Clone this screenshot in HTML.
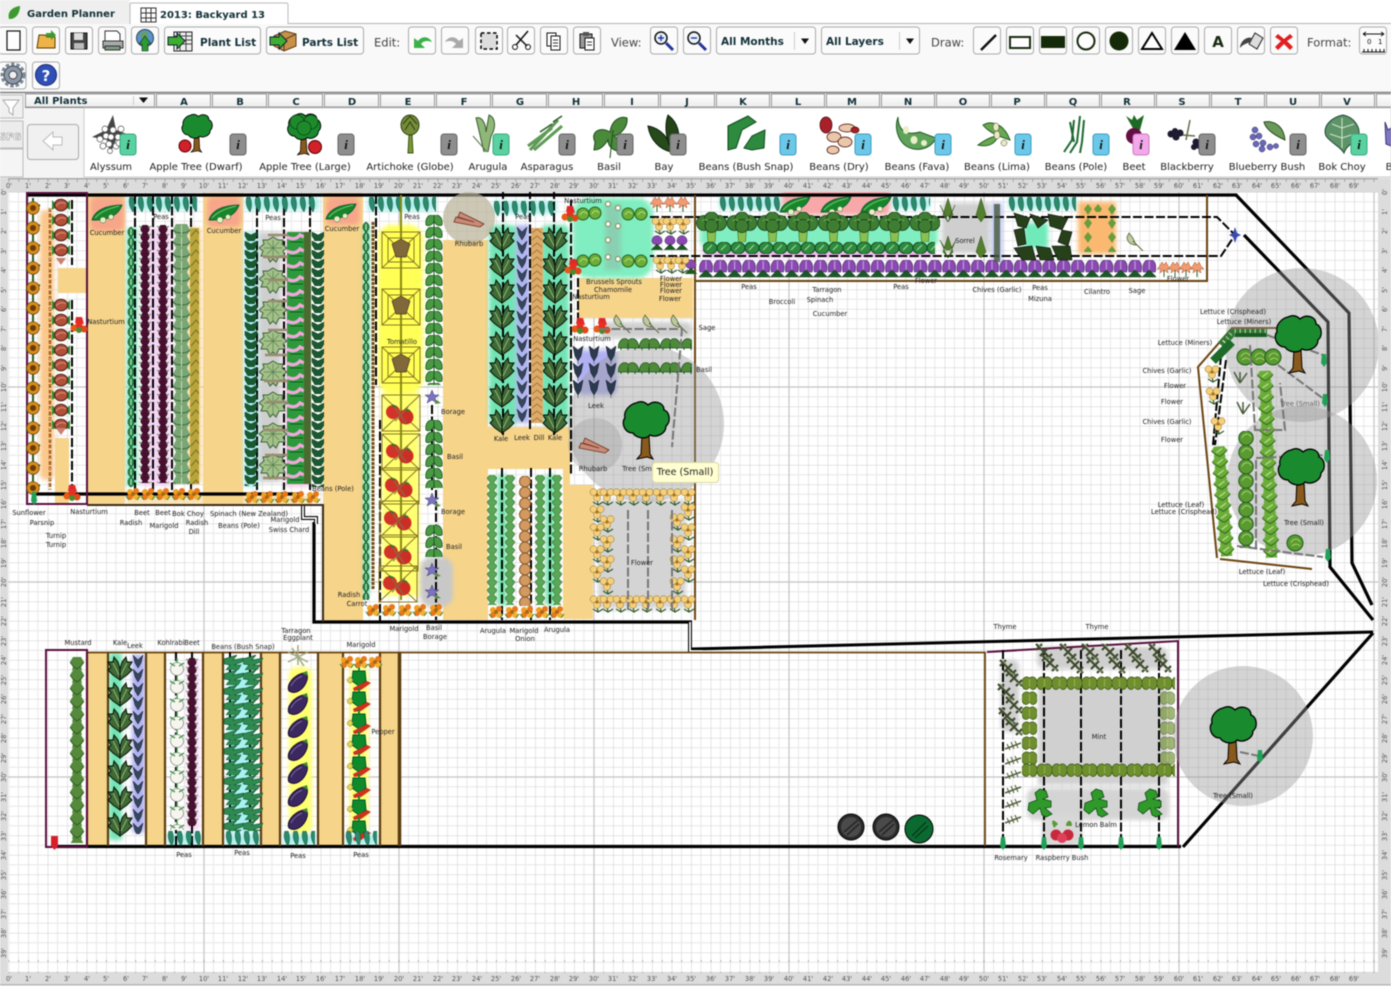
<!DOCTYPE html>
<html><head><meta charset="utf-8"><title>Garden Planner</title>
<style>
html,body{margin:0;padding:0;background:#fff;overflow:hidden}
svg{display:block;filter:blur(.45px)}
.t{font:6.7px "DejaVu Sans",sans-serif;text-anchor:middle;fill:#222}
.p{font:10px "DejaVu Sans",sans-serif;text-anchor:middle;fill:#222}
.r{font:6.6px "DejaVu Sans",sans-serif;text-anchor:middle;fill:#555}
.h{font:bold 10px "DejaVu Sans",sans-serif;fill:#123038}
.l{font:11.5px "DejaVu Sans",sans-serif;fill:#444}
.i{font:italic bold 13px "Liberation Serif",serif;text-anchor:middle;fill:#111}
.b{fill:#fbfbfb;stroke:#aaa;stroke-width:1}
.s{fill:none;stroke:#000;stroke-width:3.2}
.d{fill:none;stroke:#000;stroke-width:2;stroke-dasharray:9 2.5}
.g{fill:none;stroke:#777;stroke-width:2;stroke-dasharray:9 2.5}
.c{fill:#999;opacity:.42}
.w{filter:url(#sf)}
</style></head><body>
<svg width="1391" height="989" viewBox="0 0 1391 989" xmlns="http://www.w3.org/2000/svg">
<defs>
<filter id="sf" x="-20%" y="-20%" width="140%" height="140%"><feGaussianBlur stdDeviation="2"/></filter>
<linearGradient id="bt" x1="0" y1="0" x2="0" y2="1"><stop offset="0" stop-color="#fff"/><stop offset="1" stop-color="#ececec"/></linearGradient>
<pattern id="grid" width="19.5" height="19.5" patternUnits="userSpaceOnUse" patternTransform="translate(8.7,192)"><path d="M9.75 0V19.5M0 9.75H19.5" stroke="#e8e8e8" stroke-width="1"/><path d="M0 0V19.5M0 0H19.5" stroke="#cfcfcf" stroke-width="1.1"/></pattern>
<pattern id="tick" width="9.75" height="13" patternUnits="userSpaceOnUse" patternTransform="translate(8.7,0)"><path d="M0 10V13" stroke="#777"/></pattern>

<g id="tree"><path d="M-4 3L-5 24L-9 29L1 27L7 29L4 24L3 5Z" fill="#8a5a1c" stroke="#000"/><path d="M-10-27C-4-30 0-27 2-25C8-30 18-28 18-20C24-18 25-8 20-4C20 4 10 8 4 5C0 10-10 8-13 3C-22 3-25-8-21-12C-23-20-15-26-10-27Z" fill="#1a8a2e" stroke="#000" stroke-width="1.3"/></g>
<g id="cuc"><path d="M-15 7C-12-3 0-8 15-8C12 2 0 8-15 7Z" fill="#17862a" stroke="#053" stroke-width=".8"/><path d="M-12 5C-6-2 4-5 12-7" stroke="#8fd080" fill="none" stroke-width=".8"/><circle cx="-4" cy="7" r="3" fill="#e8f0c0" stroke="#264" stroke-width=".5"/><circle cx="4" cy="4" r="2.6" fill="#e8f0c0" stroke="#264" stroke-width=".5"/></g>
<g id="mg"><circle cx="-3" cy="-2" r="3" fill="#f0a020"/><circle cx="3" cy="-3" r="3" fill="#e87818"/><circle cx="-3" cy="3" r="3" fill="#e87818"/><circle cx="3" cy="3" r="3" fill="#f2b030"/><circle r="2" fill="#a86810"/><path d="M-7 2L-4 6M7 2L4 6" stroke="#3a8030"/></g>
<g id="na"><path d="M-4-3L-3-9L3-9L5-2Z" fill="#e02a2a"/><circle cx="-5" cy="2" r="3.5" fill="#e85a18"/><circle cx="5" cy="3" r="3.5" fill="#e04818"/><circle cy="-1" r="3.5" fill="#e83020"/><circle cx="0" cy="4" r="3" fill="#4c8a30"/></g>
<g id="yf"><path d="M0 4L1 10M-4 7L1 10L6 7" stroke="#2e5a2a" stroke-width="1.2" fill="none"/><circle cx="-3.400" cy="-2.800" r="3.500" fill="#f6cf7a" stroke="#8a6a20" stroke-width=".5"/><circle cx="3.600" cy="-2.800" r="3.500" fill="#f6cf7a" stroke="#8a6a20" stroke-width=".5"/><circle cx="0" cy="3" r="3.500" fill="#f6cf7a" stroke="#8a6a20" stroke-width=".5"/><circle r="1.600" fill="#a8741c"/></g>
<g id="pf"><path d="M-5 0C-5-7 5-7 5 0C5 5-5 5-5 0Z" fill="#8a48b0" stroke="#3a1860" stroke-width=".5"/><path d="M-6 9L0 3L6 9" fill="#1c5a22" stroke="#0c2c10" stroke-width=".5"/></g>
<g id="sf2"><path d="M-2-6L-5-1L-7 1L-3 1L-4 5L0 2L4 5L3 1L7 1L4-2L2-6L0-3Z" fill="#f49a70" stroke="#a0502c" stroke-width=".5"/><path d="M0 2V9" stroke="#2e6a2a"/></g>
<g id="trel"><path d="M-19-18H19V18H-19ZM-13-12H13V12H-13ZM-19-18L19 18M19-18L-19 18" fill="none" stroke="#8a7a20" stroke-width="1"/><path d="M-9-6L0-11L9-6L5 7H-5Z" fill="#80683a" stroke="#4a3820" stroke-width=".7"/></g>
<g id="trt"><path d="M-19-18H19V18H-19ZM-19-18L19 18M19-18L-19 18" fill="none" stroke="#8a7a20" stroke-width="1"/><circle cx="-8" cy="-1" r="7" fill="#d23228"/><circle cx="5" cy="4" r="7.5" fill="#cc2e26"/><path d="M-9-8L-5-6M4-4L9-2" stroke="#2e7a2a" stroke-width="2"/><path d="M-6-5L5 10M7-6L-6 8" stroke="#8a6a40" stroke-width="2" opacity=".7"/></g>
<g id="bor"><path d="M0-7L2-2L7-2L3 1L5 6L0 3L-5 6L-3 1L-7-2L-2-2Z" fill="#7c74c0" stroke="#3a3570" stroke-width=".5"/><path d="M3 2L9 6L3 7" fill="#5a8a4a"/></g>
<g id="sage"><path d="M-2-7L2-2L5 5C0 5-4 2-4-3Z" fill="#c0c8a0" stroke="#445a30" stroke-width=".7"/><path d="M2 1L12 11" stroke="#5a6a3a"/></g>
<g id="leek"><path d="M-5-6L0-2L5-6L3 4L0 9L-3 4Z" fill="#2c3a4e" stroke="#0a1420" stroke-width=".5"/><path d="M0 9V12" stroke="#777"/></g>
<g id="rhu"><path d="M-15 4L11 9L15 6L-9-6L-11-1L5 4L-13-1Z" fill="#c98a78" stroke="#6a3420" stroke-width=".8"/></g>
<g id="cab"><circle r="8" fill="#5a9a30" stroke="#1e5a1c"/><path d="M-4 0C-2-5 3-5 5-1M-3 3C0 0 3 1 5 3" stroke="#b8e080" fill="none" stroke-width=".8"/></g>
<g id="spr"><circle r="6" fill="#6cae38" stroke="#23601c"/><path d="M-3 1C-1-3 2-3 4 0" stroke="#c8e890" fill="none" stroke-width=".8"/></g>
<g id="egg"><path d="M-9 8C-12 2-5-7 5-10C9-11 10-7 9-3C6 7-3 12-9 8Z" fill="#3c2860" stroke="#160a30"/><path d="M4-10L9-12L10-7Z" fill="#3a8a2e"/><path d="M-7 3C-4-3 0-5 4-7" stroke="#8c7ab0" fill="none" stroke-width=".8"/></g>
<g id="pep"><path d="M-6-7L6-7L7 3L0 8L-7 3Z" fill="#0f8a2a" stroke="#053"/><path d="M-6 10L8 3L12 5L2 12L-5 13Z" fill="#d0301c"/><path d="M-8-1C-13 0-13 5-8 5L-6 2Z" fill="#e4d450" stroke="#806a18" stroke-width=".5"/><path d="M-1-7V-11H1V-7" fill="#0f8a2a"/></g>
<g id="thy"><path d="M-8-8L8 8M-4 4L4-4M-8-2L-2-8M2 8L8 2" stroke="#3e4a2c" stroke-width="2.2" fill="none"/><path d="M-6-8L-2-4M2 4L7 7" stroke="#9aa88a" fill="none"/></g>
<g id="ros"><path d="M-8 3L8-3" stroke="#50603a" stroke-width="1.5"/><path d="M-6-2L-3 4M-2-4L1 3M2-5L5 2" stroke="#50603a"/></g>
<g id="lem"><path d="M0-14L6-12L8-6L3-4L11-2L11 4L5 5L12 11L6 14L2 12L0 5L-7 11L-12 7L-11 0L-3-3L-5-10Z" fill="#2f9a2a" stroke="#0e4a10" stroke-width=".8"/></g>
<g id="bar"><circle r="13" fill="#2a2a2a" stroke="#000"/><circle r="10" fill="#4a4a4a"/><path d="M-7 5L7-7M-4 8L8-3" stroke="#222" stroke-width="1.4"/></g>
<g id="noz"><path d="M-2 -6H2L3 3L0 7L-3 3Z" fill="#22a058"/></g>

<pattern id="psun" width="16" height="20" patternUnits="userSpaceOnUse"><path d="M1 13L15 7M8 0V20" stroke="#2c5a22" stroke-width="2"/><circle cx="8" cy="10" r="6.300" fill="#d48c1c" stroke="#6a4008" stroke-width=".7"/><circle cx="8" cy="10" r="3" fill="#6a3c08"/></pattern>
<pattern id="prad" width="18" height="15" patternUnits="userSpaceOnUse"><path d="M0 3L6 9L0 13ZM18 3L12 9L18 13Z" fill="#2a8a2e"/><ellipse cx="9" cy="8" rx="6.5" ry="5.8" fill="#b2503c" stroke="#4a1a10"/><path d="M4 9C7 5 11 5 14 7" stroke="#d8957f" fill="none"/></pattern>
<pattern id="pbeet" width="12" height="8" patternUnits="userSpaceOnUse"><circle cx="6" cy="4" r="4.2" fill="#4a0f30" stroke="#26061a" stroke-width=".6"/><path d="M0 1L3 3M12 1L9 3" stroke="#5a8a4a"/></pattern>
<pattern id="pgv" width="8" height="10" patternUnits="userSpaceOnUse"><path d="M4 0C0 3 0 7 4 10C8 7 8 3 4 0Z" fill="#2c8a4a" stroke="#0e5028" stroke-width=".7"/><path d="M4 2V8" stroke="#c8f0c8"/></pattern>
<pattern id="pbok" width="17" height="12" patternUnits="userSpaceOnUse"><path d="M3 0H14L17 6L14 12H3L0 6Z" fill="#7aa574"/><path d="M0 6C3 10 14 10 17 6" stroke="#36643c" fill="none"/><path d="M8.500 1V11" stroke="#c0dcb0"/></pattern>
<pattern id="pyel" width="12" height="10" patternUnits="userSpaceOnUse"><rect width="12" height="10" fill="#b8a63c"/><path d="M1 8L6 2L11 8" stroke="#7a6e20" fill="none"/></pattern>
<pattern id="pdl" width="14" height="9" patternUnits="userSpaceOnUse"><path d="M1 0L7 3L13 0L13 4L10 9H4L1 4Z" fill="#1a5a30" stroke="#0a2c18" stroke-width=".5"/></pattern>
<pattern id="pspn" width="28" height="31" patternUnits="userSpaceOnUse"><path d="M14 1L19 4L24 4L23 8L28 12L24 15L26 20L20 20L17 26L14 23L11 26L8 20L2 20L4 15L0 12L5 8L4 4L9 4Z" fill="#a2c088" stroke="#3c6238"/><path d="M14 4V23M5 12H23M8 6L20 18M20 6L8 18" stroke="#5a8050" stroke-width=".7"/></pattern>
<pattern id="pcha" width="24" height="14" patternUnits="userSpaceOnUse"><rect width="24" height="14" fill="#2c9a3a"/><path d="M0 5C5 8 10 7 13 3L17 5" stroke="#f0a8dc" stroke-width="3.400" fill="none"/><path d="M3 10H16" stroke="#0f5a20"/><rect x="17" width="7" height="14" fill="#4a6a30"/></pattern>
<pattern id="pkale" width="26" height="26" patternUnits="userSpaceOnUse"><path d="M13 25L6 20L1 15L4 12L1 7L6 7L7 2L11 7L13 14Z" fill="#3f6a35" stroke="#060f06"/><path d="M13 25L20 20L25 15L22 12L25 7L20 7L19 2L15 7L13 14Z" fill="#3f6a35" stroke="#060f06"/><path d="M12 20L6 8M14 20L20 8" stroke="#b0c890" stroke-width=".8"/></pattern>
<pattern id="pleek" width="12" height="14" patternUnits="userSpaceOnUse"><path d="M1 1L6 6L11 1L9 9L6 14L3 9Z" fill="#36465c" stroke="#0e1a28" stroke-width=".5"/></pattern>
<pattern id="pdil" width="12" height="7" patternUnits="userSpaceOnUse"><rect width="12" height="7" fill="#dcab68"/><path d="M1 5L6 1L11 5" stroke="#a8743c" fill="none"/></pattern>
<pattern id="pbas" width="18" height="12" patternUnits="userSpaceOnUse"><path d="M9 0C3-1 0 4 1 10C5 12 8 9 9 6C10 9 13 12 17 10C18 4 15-1 9 0Z" fill="#4a9a44" stroke="#144a18" stroke-width=".7"/><path d="M9 0V12" stroke="#1a5a20"/></pattern>
<pattern id="pbr" width="21" height="14" patternUnits="userSpaceOnUse"><path d="M0 12C1 1 9 1 10.500 5C12 1 20 1 21 12Z" fill="#4e8a3a" stroke="#1c501c" stroke-width=".7"/><path d="M3 12V14M10 7V14M17 12V14" stroke="#1c501c"/></pattern>
<pattern id="ppur" width="14.3" height="18" patternUnits="userSpaceOnUse"><path d="M1 12C-1 3 4-1 7 0C11-1 15 3 13 12Z" fill="#8a4ab2" stroke="#3a1a60" stroke-width=".6"/><path d="M7 1V11" stroke="#d0a8e8"/><path d="M0 17L7 10L14 17Z" fill="#1a5a26" stroke="#0a2810" stroke-width=".5"/></pattern>
<pattern id="pbro" width="30.500" height="30" patternUnits="userSpaceOnUse"><path d="M11 16H20L19 30H12Z" fill="#8ac050" stroke="#3a6a20" stroke-width=".6"/><g fill="#3f7e32" stroke="#123a14" stroke-width=".8"><circle cx="8" cy="11" r="7.500"/><circle cx="23" cy="11" r="7.500"/><circle cx="15.500" cy="7" r="7"/><circle cx="15.500" cy="14" r="6.500"/></g><path d="M6 9C8 7 10 7 12 9M19 9C21 7 23 7 25 9" stroke="#6da858" fill="none"/></pattern>
<pattern id="phsp" width="14" height="12" patternUnits="userSpaceOnUse"><ellipse cx="7" cy="6" rx="7" ry="6" fill="#2e8a3e" stroke="#0e4a1c"/><path d="M4 8L9 3" stroke="#a8dca0"/></pattern>
<pattern id="ppea" width="9" height="15" patternUnits="userSpaceOnUse"><path d="M2 0C0 5 2 11 5 15C7 10 7 5 5 0Z" fill="#2c8a6a" stroke="#0e4e40" stroke-width=".5"/></pattern>
<pattern id="paru" width="10" height="8" patternUnits="userSpaceOnUse"><path d="M5-2L10 3L5 10L0 3Z" fill="#5aa855" stroke="#286a30" stroke-width=".6"/></pattern>
<pattern id="poni" width="12" height="11" patternUnits="userSpaceOnUse"><ellipse cx="6" cy="5.5" rx="5.5" ry="5.5" fill="#d29a60" stroke="#8a5a28"/></pattern>
<pattern id="plet" width="16" height="11" patternUnits="userSpaceOnUse"><path d="M3 0H13L16 4L13 7L14 11H2L3 7L0 4Z" fill="#6bac38"/><path d="M0 4L3 7L8 10L13 7L16 4" stroke="#2a641e" fill="none"/><path d="M5 6L11 2" stroke="#d0f0a8"/></pattern>
<pattern id="pmin" width="15" height="15" patternUnits="userSpaceOnUse"><path d="M7.500 2C3-1-1 3 0 9C1 14 5 15 7.500 11C10 15 14 14 15 9C16 3 12-1 7.500 2Z" fill="#6f8f2f" stroke="#34500e" stroke-width=".7"/><path d="M7.500 3V11" stroke="#a8c060" stroke-width=".7"/></pattern>
<pattern id="pmst" width="14" height="13" patternUnits="userSpaceOnUse"><path d="M3 0H11L14 5L11 9L12 13H2L3 9L0 5Z" fill="#558a3c"/><path d="M0 5L3 9L7 12L11 9L14 5" stroke="#2c5a22" fill="none"/></pattern>
<pattern id="pbb" width="20" height="15" patternUnits="userSpaceOnUse"><path d="M0 4L13 0L9 5L20 3L18 7L10 10L17 10L14 15L2 15L6 10L0 9Z" fill="#2e8a50" stroke="#0e4a28" stroke-width=".6"/></pattern>
<pattern id="pkoh" width="16" height="18" patternUnits="userSpaceOnUse"><circle cx="8" cy="11" r="6.500" fill="#f6f6ee" stroke="#666" stroke-width=".6"/><path d="M1 5L6 8M15 5L10 8M8 0V5" stroke="#4a9a50" stroke-width="1.500"/></pattern>
<pattern id="pcab" width="16" height="14.300" patternUnits="userSpaceOnUse"><circle cx="8" cy="7.100" r="7.200" fill="#5a9a30" stroke="#1e5a1c"/><path d="M4 7C6 2 11 2 13 6" stroke="#b8e080" fill="none" stroke-width=".8"/></pattern>
<pattern id="pora" width="12" height="14" patternUnits="userSpaceOnUse"><path d="M6 2L10 7L6 13L2 7Z" fill="#6a9c3c"/></pattern>

<g id="bi"><rect x="-8" y="-11" width="16" height="21" rx="3" fill="#8e8e8e" stroke="#666"/><text class="i" y="4">i</text></g>
<g id="bg"><rect x="-8" y="-11" width="16" height="21" rx="3" fill="#58d2a0" stroke="#3aa87c"/><text class="i" y="4">i</text></g>
<g id="bb"><rect x="-8" y="-11" width="16" height="21" rx="3" fill="#6cc8e8" stroke="#3a9cc0"/><text class="i" y="4">i</text></g>
<g id="bp"><rect x="-8" y="-11" width="16" height="21" rx="3" fill="#f2a8ea" stroke="#c87cc0"/><text class="i" y="4">i</text></g>
</defs>

<!-- TABS / TOOLBAR -->
<rect width="1391" height="24" fill="#fff"/>
<rect width="130" height="24" fill="#efefef"/>
<rect y="24" width="1391" height="68" fill="#f9f9f9"/>
<path d="M288 23.5H1391" stroke="#b4b4b4"/>
<path d="M130 24V5Q130 3 132 3H286Q288 3 288 5V24" fill="#fff" stroke="#bbb"/>
<path d="M9 19C7 12 12 7 20 6C20 13 16 19 10 19Z" fill="#3c9a2e"/>
<text x="27" y="17" class="h">Garden Planner</text>
<path d="M141 8H156V22H141ZM141 13H156M141 18H156M146 8V22M151 8V22" fill="none" stroke="#333"/>
<text x="160" y="18" class="h">2013: Backyard 13</text>

<!-- buttons -->
<rect class="b" x="-1" y="27" width="27.5" height="27" rx="3"/><rect x="7" y="31" width="13" height="19" fill="#fff" stroke="#111" stroke-width="1.2"/>
<rect class="b" x="32.500" y="27" width="27" height="27" rx="3"/><path d="M37 48L39 35H45L47 37H55V48Z" fill="#eeb44a" stroke="#5a3a00"/><path d="M46 33H51V30L56 35L51 40V37H46Z" fill="#3c9a2e"/>
<rect class="b" x="65.500" y="27" width="27" height="27" rx="3"/><rect x="71" y="33" width="16" height="16" fill="#444" stroke="#111"/><rect x="74" y="33" width="9" height="7" fill="#ddd"/><rect x="74" y="43" width="10" height="6" fill="#bbb"/>
<rect class="b" x="98.500" y="27" width="27" height="27" rx="3"/><path d="M105 41V31H117L120 34V41" fill="#fff" stroke="#333"/><rect x="103" y="41" width="20" height="7" fill="#aaa" stroke="#333"/><rect x="105" y="46" width="15" height="4" fill="#7a9a80" stroke="#333"/>
<rect class="b" x="131.500" y="27" width="27" height="27" rx="3"/><circle cx="145" cy="38" r="8.500" fill="#5a94c8" stroke="#345"/><path d="M140 33L147 32L148 38L143 40Z" fill="#6aa050"/><path d="M145 36L151 44H148V51H142V44H139Z" fill="#2e9a32" stroke="#123" stroke-width=".6"/>
<rect class="b" x="164.500" y="27" width="96" height="27" rx="3"/><rect x="174" y="32" width="18" height="19" fill="#eee" stroke="#222"/><path d="M174 36H192M174 40H192M174 44H192M180 32V51M186 32V51" stroke="#444"/><path d="M168 37H177V33L185 41L177 49V45H168Z" fill="#3cae32" stroke="#123"/>
<text x="200" y="46" class="h" style="font-size:10.5px">Plant List</text>
<rect class="b" x="266.500" y="27" width="97" height="27" rx="3"/><path d="M274 36L285 31L296 34V46L284 51L274 46Z" fill="#c8914a" stroke="#5a3a18"/><path d="M284 40V51M274 36L284 40L296 34" stroke="#5a3a18" fill="none"/><path d="M270 37H279V33L287 41L279 49V45H270Z" fill="#3cae32" stroke="#123"/>
<text x="302" y="46" class="h" style="font-size:10.5px">Parts List</text>
<text x="374" y="46.500" class="l">Edit:</text>
<rect class="b" x="408.500" y="27" width="27" height="27" rx="3"/><path d="M414 48V38L418 41C423 35 429 37 432 42C427 40 423 41 421 44L425 48Z" fill="#3cb04a"/>
<rect class="b" x="441.500" y="27" width="27" height="27" rx="3"/><path d="M463 48V38L459 41C454 35 448 37 445 42C450 40 454 41 456 44L452 48Z" fill="#aaa"/>
<rect class="b" x="475.500" y="27" width="27" height="27" rx="3"/><rect x="481" y="33" width="16" height="16" fill="#ddd" stroke="#000" stroke-width="1.500" stroke-dasharray="3.500 2.500"/>
<rect class="b" x="507.500" y="27" width="27" height="27" rx="3"/><path d="M528 31L516 45M516 35L527 46" stroke="#111" stroke-width="1.500" fill="none"/><circle cx="515" cy="47" r="2.500" fill="none" stroke="#111"/><circle cx="528" cy="47" r="2.500" fill="none" stroke="#111"/>
<rect class="b" x="540.500" y="27" width="27" height="27" rx="3"/><path d="M547 33H556V46H547Z" fill="#fff" stroke="#111"/><path d="M551 36H560V50H551Z" fill="#fff" stroke="#111"/><path d="M553 40H558M553 43H558M553 46H558" stroke="#333"/>
<rect class="b" x="573.500" y="27" width="27" height="27" rx="3"/><rect x="580" y="34" width="12" height="14" fill="#999" stroke="#111"/><rect x="583" y="32" width="6" height="4" fill="#555"/><path d="M585 38H594V50H585Z" fill="#fff" stroke="#111"/><path d="M587 42H592M587 45H592" stroke="#333"/>
<text x="611" y="46.500" class="l">View:</text>
<rect class="b" x="650.500" y="27" width="27" height="27" rx="3"/><circle cx="661" cy="38" r="6" fill="#eaf2fa" stroke="#111" stroke-width="1.500"/><path d="M666 43L673 50" stroke="#23349a" stroke-width="3"/><path d="M658 38H664M661 35V41" stroke="#23349a" stroke-width="1.400"/>
<rect class="b" x="683.500" y="27" width="27" height="27" rx="3"/><circle cx="694" cy="38" r="6" fill="#eaf2fa" stroke="#111" stroke-width="1.500"/><path d="M699 43L706 50" stroke="#23349a" stroke-width="3"/><path d="M691 38H697" stroke="#23349a" stroke-width="1.400"/>
<rect class="b" x="716.500" y="27" width="99" height="27" rx="3"/><text x="721" y="45" class="h" style="font-size:10.500px">All Months</text><path d="M794.500 32V50" stroke="#ccc"/><path d="M801 38.500H809L805 44Z" fill="#111"/>
<rect class="b" x="821.500" y="27" width="98" height="27" rx="3"/><text x="826" y="45" class="h" style="font-size:10.500px">All Layers</text><path d="M899.500 32V50" stroke="#ccc"/><path d="M906 38.500H914L910 44Z" fill="#111"/>
<text x="931" y="46.500" class="l">Draw:</text>
<rect class="b" x="973.500" y="27" width="27" height="27" rx="3"/><path d="M981 50L996 35" stroke="#111" stroke-width="2.500"/>
<rect class="b" x="1006.500" y="27" width="27" height="27" rx="3"/><rect x="1010" y="37" width="20" height="11" fill="#fff" stroke="#1a2a10" stroke-width="2"/>
<rect class="b" x="1039.500" y="27" width="27" height="27" rx="3"/><rect x="1041" y="36" width="24" height="12" fill="#142a08"/>
<rect class="b" x="1072.500" y="27" width="27" height="27" rx="3"/><circle cx="1086" cy="41" r="8.500" fill="#fff" stroke="#1a2a10" stroke-width="2"/>
<rect class="b" x="1105.500" y="27" width="27" height="27" rx="3"/><circle cx="1119" cy="41" r="9.500" fill="#142a08"/>
<rect class="b" x="1138.500" y="27" width="27" height="27" rx="3"/><path d="M1152 33L1162 49H1142Z" fill="#fff" stroke="#000" stroke-width="2"/>
<rect class="b" x="1171.500" y="27" width="27" height="27" rx="3"/><path d="M1185 32L1196 50H1174Z" fill="#000"/>
<rect class="b" x="1204.500" y="27" width="27" height="27" rx="3"/><text x="1218" y="47" style="font:bold 15px 'DejaVu Sans',sans-serif;text-anchor:middle;fill:#1a2a10">A</text>
<rect class="b" x="1237.500" y="27" width="27" height="27" rx="3"/><path d="M1249 44L1255 33L1263 38L1257 49Z" fill="#ddd" stroke="#222"/><path d="M1252 38C1246 36 1240 42 1240 48C1243 44 1248 43 1251 42Z" fill="#444"/>
<rect class="b" x="1270.500" y="27" width="27" height="27" rx="3"/><path d="M1278 34L1284 39L1290 34L1293 37L1287 41L1293 47L1290 50L1284 44L1278 50L1275 47L1281 41L1275 37Z" fill="#e02020"/>
<text x="1307" y="46.500" class="l">Format:</text>
<rect class="b" x="1359.500" y="27" width="27" height="27" rx="3"/><path d="M1363 34H1384M1363 34L1366 32M1363 34L1366 36M1384 34L1381 32M1384 34L1381 36" stroke="#111" fill="none"/><text x="1367" y="44" style="font:7px 'DejaVu Sans',sans-serif;fill:#111">0</text><text x="1378" y="44" style="font:7px 'DejaVu Sans',sans-serif;fill:#111">1</text><path d="M1362 52H1385M1364 49V52M1368 49V52M1372 49V52M1376 49V52M1380 49V52M1384 49V52" stroke="#111"/>
<rect class="b" x="-1" y="62" width="27" height="27" rx="3"/><circle cx="13" cy="75" r="9" fill="#8a98a8" stroke="#444" stroke-width="1"/><circle cx="13" cy="75" r="11" fill="none" stroke="#7a8898" stroke-width="3" stroke-dasharray="3.500 2"/><circle cx="13" cy="75" r="4" fill="#f0f0f0" stroke="#444"/>
<rect class="b" x="32.500" y="62" width="27" height="27" rx="3"/><circle cx="46" cy="75" r="10.500" fill="#3050b8" stroke="#16286a"/><text x="46" y="81" style="font:bold 15px 'DejaVu Sans',sans-serif;text-anchor:middle;fill:#fff">?</text>

<!-- header row -->
<rect y="92" width="1391" height="86" fill="#f4f4f4"/>
<path d="M0 92.500H1391" stroke="#808080" stroke-width="1.500"/>
<rect x="25.500" y="94" width="129" height="13" fill="url(#bt)" stroke="#999"/>
<text x="34" y="104" class="h">All Plants</text>
<path d="M133.500 96V105" stroke="#ccc"/><path d="M139 97.500H148L143.500 103Z" fill="#111"/>
<g fill="url(#bt)" stroke="#999">
<rect x="156.500" y="94" width="54" height="13"/><rect x="212.500" y="94" width="54" height="13"/><rect x="268.500" y="94" width="54" height="13"/><rect x="324.500" y="94" width="54" height="13"/><rect x="380.500" y="94" width="54" height="13"/><rect x="436.500" y="94" width="54" height="13"/><rect x="492.500" y="94" width="54" height="13"/><rect x="548.500" y="94" width="54" height="13"/><rect x="604.500" y="94" width="54" height="13"/><rect x="660.500" y="94" width="54" height="13"/><rect x="716.500" y="94" width="53" height="13"/><rect x="771.500" y="94" width="53" height="13"/><rect x="826.500" y="94" width="53" height="13"/><rect x="881.500" y="94" width="53" height="13"/><rect x="936.500" y="94" width="53" height="13"/><rect x="991.500" y="94" width="53" height="13"/><rect x="1046.500" y="94" width="53" height="13"/><rect x="1101.500" y="94" width="53" height="13"/><rect x="1156.500" y="94" width="53" height="13"/><rect x="1211.500" y="94" width="53" height="13"/><rect x="1266.500" y="94" width="53" height="13"/><rect x="1321.500" y="94" width="53" height="13"/><rect x="1376.500" y="94" width="53" height="13"/>
</g>
<g style="font:bold 10px 'DejaVu Sans',sans-serif;text-anchor:middle;fill:#123038"><text x="184" y="105">A</text><text x="240" y="105">B</text><text x="296" y="105">C</text><text x="352" y="105">D</text><text x="408" y="105">E</text><text x="464" y="105">F</text><text x="520" y="105">G</text><text x="576" y="105">H</text><text x="632" y="105">I</text><text x="687" y="105">J</text><text x="743" y="105">K</text><text x="798" y="105">L</text><text x="852" y="105">M</text><text x="908" y="105">N</text><text x="963" y="105">O</text><text x="1017" y="105">P</text><text x="1073" y="105">Q</text><text x="1127" y="105">R</text><text x="1182" y="105">S</text><text x="1238" y="105">T</text><text x="1293" y="105">U</text><text x="1347" y="105">V</text></g>
<path d="M25 107.500H1391" stroke="#888"/>
<rect x="84" y="108" width="1307" height="69" fill="#fff" stroke="#ccc"/>
<path d="M-2 95H23V118H-2Z" fill="#f0f0f0" stroke="#bbb"/><path d="M3 100H19L13 108V115L9 112V108Z" fill="#fff" stroke="#aaa"/>
<path d="M-2 121H23V148H-2Z" fill="#ececec" stroke="#bbb"/><text x="10" y="140" style="font:bold 10px 'DejaVu Sans',sans-serif;text-anchor:middle;fill:#fff;stroke:#999;stroke-width:.6">SFG</text>
<path d="M-2 149H23V177H-2Z" fill="#f5f5f5" stroke="#bbb"/>
<rect x="27.500" y="124.500" width="51" height="35" rx="3" fill="#f0f0f0" stroke="#aaa"/><path d="M43 141L53 132V137H62V145H53V150Z" fill="#fff" stroke="#bbb"/>

<!-- plant icons -->
<g>
<path d="M113 115L116 130L130 135L116 140L110 154L107 140L92 137L106 130Z" fill="#444"/><g fill="#fff" stroke="#555" stroke-width=".7"><circle cx="106" cy="136" r="3"/><circle cx="113" cy="130" r="3"/><circle cx="118" cy="137" r="3"/><circle cx="109" cy="144" r="3"/><circle cx="116" cy="146" r="3"/><circle cx="103" cy="146" r="3"/><circle cx="121" cy="129" r="3"/><circle cx="111" cy="137" r="3"/><circle cx="105" cy="129" r="3"/><circle cx="119" cy="143" r="3"/><circle cx="100" cy="139" r="3"/><circle cx="110" cy="151" r="2.500"/></g>
<use href="#tree" transform="translate(197,133) scale(.66)"/><circle cx="185" cy="146" r="6" fill="#d4202a" stroke="#500"/>
<use href="#tree" transform="translate(304,134) scale(.72)"/><g fill="#1e8a2c" stroke="#0a4014" stroke-width=".7"><circle cx="297" cy="122" r="7"/><circle cx="311" cy="122" r="7"/><circle cx="304" cy="128" r="7"/></g><circle cx="315" cy="147" r="6.500" fill="#d4202a" stroke="#500"/>
<path d="M409 135L412 135L413 153L408 153Z" fill="#7a9a34" stroke="#3c5210"/><ellipse cx="410" cy="125" rx="9" ry="10" fill="#768c3a" stroke="#2e4010"/><path d="M403 124L410 116L417 124M405 130L410 122L415 130" stroke="#2e4010" fill="none"/>
<path d="M484 152L476 118C482 116 486 124 486 132L489 115C496 118 496 128 491 136L488 152" fill="#8fb878" stroke="#3a5a30"/><path d="M487 152L480 144L473 136" stroke="#5a7a4a" fill="none"/>
<path d="M530 150L558 120M534 150L562 126M528 146L552 128" stroke="#5f9a56" stroke-width="3"/><path d="M553 122L562 116M540 132L552 124" stroke="#2a5a2a" stroke-width="1.500"/>
<path d="M610 158L613 130M595 142C590 132 600 126 610 132C612 118 622 116 627 118C628 126 622 134 614 136C620 140 622 146 620 152C612 150 608 146 608 140C604 146 600 150 594 150Z" fill="#4a8a3a" stroke="#1c4a1c"/>
<path d="M648 126C660 128 670 138 672 152C660 150 650 140 648 126Z" fill="#274a1c" stroke="#0a200a"/><path d="M668 115C680 124 682 140 674 152C666 144 664 126 668 115Z" fill="#244418" stroke="#0a200a"/>
<path d="M728 126L748 116L756 122L742 130L736 148L728 150ZM744 148L752 136L765 130L764 148L752 150Z" fill="#2e8a3e" stroke="#0e4a1c"/>
<g stroke="#400" stroke-width=".7"><ellipse cx="826" cy="125" rx="6" ry="8" fill="#a8202a"/><ellipse cx="834" cy="137" rx="7" ry="5" fill="#e8c8a8"/><ellipse cx="845" cy="142" rx="7" ry="5" fill="#e8c8a8"/><ellipse cx="847" cy="128" rx="8" ry="4" fill="#e8c8a8"/><ellipse cx="833" cy="150" rx="6" ry="4" fill="#e8c8a8"/><ellipse cx="855" cy="130" rx="4" ry="3" fill="#a8202a"/></g>
<path d="M898 117C898 130 906 136 920 132L936 138C930 150 916 152 906 146C898 140 894 128 898 117Z" fill="#5fa25a" stroke="#1e5a20"/><g fill="#e8f0c8"><ellipse cx="906" cy="130" rx="3" ry="4"/><ellipse cx="914" cy="140" rx="3.500" ry="4"/><ellipse cx="924" cy="143" rx="3" ry="3"/></g>
<path d="M983 125C992 120 1004 124 1010 140C1004 138 990 134 983 125ZM978 145C985 140 992 136 998 136C996 142 990 148 978 145Z" fill="#6aa850" stroke="#1e5a20"/><g fill="#ece8c0" stroke="#444" stroke-width=".5"><ellipse cx="996" cy="127" rx="3" ry="4"/><ellipse cx="997" cy="135" rx="3" ry="4"/><ellipse cx="1004" cy="143" rx="3" ry="3"/></g>
<path d="M1074 120L1072 140L1064 152M1080 116L1077 142L1070 153M1084 120L1082 142L1080 153M1070 122L1074 142" stroke="#1e6a30" stroke-width="2" fill="none"/>
<path d="M1134 130L1126 116L1132 120L1134 115L1137 120L1144 115L1140 130Z" fill="#1e6a24"/><circle cx="1134" cy="136" r="8" fill="#640e44"/><path d="M1134 143V150" stroke="#640e44"/>
<path d="M1170 134L1195 136M1190 120L1186 140" stroke="#6a6a4a" stroke-width="1.500"/><g fill="#1e1a30"><circle cx="1171" cy="134" r="3.500"/><circle cx="1176" cy="137" r="3.500"/><circle cx="1180" cy="133" r="3.500"/><circle cx="1196" cy="142" r="3.500"/><circle cx="1194" cy="147" r="3"/><circle cx="1175" cy="131" r="3"/><circle cx="1199" cy="146" r="3"/></g>
<path d="M1264 122C1276 120 1284 128 1285 140C1276 136 1266 130 1264 122Z" fill="#6a9a5a" stroke="#2a4a20"/><g fill="#6a68b8" stroke="#2a2860" stroke-width=".5"><circle cx="1255" cy="130" r="3"/><circle cx="1253" cy="137" r="3"/><circle cx="1259" cy="136" r="3"/><circle cx="1256" cy="144" r="3"/><circle cx="1263" cy="143" r="3"/><circle cx="1262" cy="149" r="3"/><circle cx="1270" cy="147" r="3"/><circle cx="1276" cy="146" r="2.500"/></g>
<path d="M1343 115C1354 117 1362 128 1358 138C1352 144 1346 146 1344 153C1340 146 1332 144 1326 136C1322 126 1332 117 1343 115Z" fill="#5e9268" stroke="#1e4a30"/><path d="M1342 118V148M1342 128L1332 124M1342 128L1354 124M1342 138L1330 134M1342 138L1354 134" stroke="#cfe8c8"/>
<path d="M1385 122L1388 130L1391 128V146L1386 144Z" fill="#8078c8" stroke="#3a3570"/>
</g>
<use href="#bg" x="128" y="145"/><use href="#bi" x="238" y="145"/><use href="#bi" x="346" y="145"/><use href="#bi" x="449" y="145"/><use href="#bg" x="501" y="145"/><use href="#bi" x="567" y="145"/><use href="#bi" x="625" y="145"/><use href="#bi" x="678" y="145"/><use href="#bb" x="788" y="145"/><use href="#bb" x="863" y="145"/><use href="#bb" x="943" y="145"/><use href="#bb" x="1023" y="145"/><use href="#bb" x="1101" y="145"/><use href="#bp" x="1141" y="145"/><use href="#bi" x="1207" y="145"/><use href="#bi" x="1298" y="145"/><use href="#bg" x="1359" y="145"/>
<g style="font:10px 'DejaVu Sans',sans-serif;text-anchor:middle;fill:#222"><text x="111" y="170">Alyssum</text><text x="196" y="170">Apple Tree (Dwarf)</text><text x="305" y="170">Apple Tree (Large)</text><text x="410" y="170">Artichoke (Globe)</text><text x="488" y="170">Arugula</text><text x="547" y="170">Asparagus</text><text x="609" y="170">Basil</text><text x="664" y="170">Bay</text><text x="746" y="170">Beans (Bush Snap)</text><text x="839" y="170">Beans (Dry)</text><text x="917" y="170">Beans (Fava)</text><text x="997" y="170">Beans (Lima)</text><text x="1076" y="170">Beans (Pole)</text><text x="1134" y="170">Beet</text><text x="1187" y="170">Blackberry</text><text x="1267" y="170">Blueberry Bush</text><text x="1342" y="170">Bok Choy</text><text x="1389" y="170">B</text></g>

<!-- CANVAS -->
<rect x="0" y="178" width="1391" height="811" fill="#fff"/>
<rect x="8.700" y="192" width="1369.300" height="780.500" fill="url(#grid)"/>
<path d="M204 192V972M399 192V972M594 192V972M789 192V972M984 192V972M1179 192V972M1374 192V972M8 387H1378M8 582H1378M8 777H1378" stroke="#c4c4c4" stroke-width="1.200" fill="none"/>

<!-- sand -->
<g fill="#f6d48a">
<rect x="87" y="193" width="38" height="312"/><rect x="203" y="193" width="40" height="312"/><rect x="323" y="193" width="40" height="430"/><rect x="443" y="240" width="45" height="380"/><rect x="488" y="427" width="80" height="42"/><rect x="563" y="427" width="7" height="192"/><rect x="563" y="485" width="30" height="134"/><rect x="578" y="278" width="115" height="40"/><rect x="58" y="268" width="28" height="25"/><rect x="55" y="438" width="14" height="65"/>
<rect x="88" y="652" width="19" height="194"/><rect x="146" y="652" width="19" height="194"/><rect x="204" y="652" width="19" height="194"/><rect x="262" y="652" width="19" height="194"/><rect x="319" y="652" width="23" height="194"/><rect x="381" y="652" width="18" height="194"/>
</g>
<rect x="127" y="496" width="76" height="9" fill="#f6d48a" opacity=".6"/><rect x="243" y="496" width="70" height="9" fill="#f6d48a" opacity=".6"/>

<!-- glows -->
<g class="w">
<rect x="40" y="210" width="14" height="270" rx="6" fill="#fbc88c"/>
<rect x="90" y="197" width="34" height="34" rx="6" fill="#f8a68a"/><rect x="207" y="197" width="34" height="30" rx="6" fill="#f8a68a"/><rect x="326" y="197" width="34" height="28" rx="6" fill="#f8a68a"/>
<rect x="127" y="197" width="70" height="13" fill="#b0f0ec"/><rect x="245" y="197" width="74" height="13" fill="#b0f0ec"/><rect x="367" y="197" width="68" height="14" fill="#b0f0ec"/><rect x="493" y="201" width="64" height="13" fill="#b0f0ec"/>
<rect x="127" y="228" width="10" height="258" fill="#72e4b4"/><rect x="141" y="228" width="30" height="258" fill="#f6d4f4"/><rect x="188" y="228" width="13" height="255" fill="#f8cc80"/>
<rect x="244" y="232" width="14" height="255" fill="#a8f0ee"/><rect x="259" y="232" width="22" height="250" fill="#cfcfcf"/><rect x="285" y="232" width="24" height="255" fill="#f8c8ec"/>
<rect x="364" y="225" width="5" height="370" fill="#60d8a0"/>
<rect x="378" y="225" width="45" height="168" rx="14" fill="#ffff55"/><rect x="382" y="392" width="37" height="204" fill="#ffff70"/>
<rect x="489" y="225" width="28" height="200" rx="6" fill="#72e4b4"/><rect x="541" y="225" width="28" height="200" rx="6" fill="#72e4b4"/><rect x="516" y="225" width="14" height="198" fill="#b0b4f0"/>
<rect x="498" y="475" width="8" height="130" fill="#60e0a0"/><rect x="546" y="475" width="8" height="130" fill="#60e0a0"/>
<rect x="573" y="198" width="80" height="80" rx="16" fill="#80eec0"/>
<rect x="577" y="350" width="40" height="45" rx="6" fill="#b0b0f2"/>
<rect x="782" y="188" width="108" height="27" rx="6" fill="#f8a8a8"/>
<rect x="719" y="197" width="62" height="12" fill="#b0f0ec"/><rect x="892" y="197" width="38" height="12" fill="#b0f0ec"/><rect x="1008" y="197" width="68" height="12" fill="#b0f0ec"/>
<rect x="700" y="218" width="238" height="28" rx="6" fill="#80eec0"/><rect x="703" y="248" width="232" height="9" rx="3" fill="#f0b8f0"/>
<rect x="1024" y="223" width="24" height="25" fill="#70eab8"/>
<rect x="1078" y="202" width="38" height="52" fill="#fab870"/>
<rect x="992" y="203" width="10" height="60" fill="#b4c0f0"/>
<rect x="289" y="667" width="23" height="167" rx="8" fill="#ffff70"/><rect x="350" y="667" width="18" height="165" rx="6" fill="#ffff70"/>
<rect x="109" y="653" width="13" height="187" fill="#72e4b4"/><rect x="132" y="655" width="13" height="178" rx="3" fill="#b0b0f0"/><rect x="187" y="660" width="12" height="170" fill="#f6d4f4"/>
<rect x="228" y="660" width="24" height="172" fill="#a8f2f2"/>
<rect x="167" y="834" width="34" height="11" fill="#b0f0ec"/><rect x="225" y="834" width="35" height="11" fill="#b0f0ec"/><rect x="283" y="834" width="32" height="11" fill="#b0f0ec"/><rect x="345" y="834" width="32" height="11" fill="#b0f0ec"/>
<rect x="942" y="203" width="48" height="50" fill="#cfcfcf"/>
<rect x="1037" y="647" width="131" height="22" rx="8" fill="#cfcfcf"/><rect x="1001" y="660" width="18" height="72" rx="6" fill="#cfcfcf"/>
<rect x="1038" y="685" width="130" height="100" fill="#d0d0d0"/><rect x="1027" y="788" width="142" height="32" rx="8" fill="#d4d4d4"/><rect x="1042" y="815" width="40" height="32" rx="10" fill="#d8d8d8"/>
<rect x="600" y="322" width="92" height="16" rx="6" fill="#cfcfcf"/>
<rect x="598" y="500" width="88" height="108" fill="#d4d4d4"/>
<rect x="420" y="557" width="33" height="50" rx="12" fill="#c8c8c8"/>
</g>

<!-- structural lines -->
<path class="s" d="M27 195H1236L1349 313L1352 563L1372 605"/>
<path class="s" d="M1244 235L1328 322L1330 567L1373 620"/>
<path d="M692 649L1373 632" stroke="#000" stroke-width="3"/>
<path class="s" d="M33 494H303M314 522V622H692"/>
<path class="s" d="M55 846.500H1181M1183 847L1373 633"/>
<path d="M303 505V518H316V524M690 622V651H703" fill="none" stroke="#000" stroke-width="4"/><path d="M303 505V518H316V524M690 622V651H703" fill="none" stroke="#fff" stroke-width="1.800"/>
<g fill="none" stroke="#5a3c10" stroke-width="2">
<path d="M695 281H1207V195M695 195V620" stroke="#6b4410"/>
<path d="M87 505H323V622" stroke="#3a2a1a"/>
<path d="M87 652.500H985V846" stroke="#6b4410" stroke-width="1.800"/>
<path d="M1278 328H1232L1198 367L1217 558M1220 559L1312 569" stroke="#6b4410"/>
<path d="M87 652V846M108 652V846M146 652V846M165 652V846M203 652V846M223 652V846M261 652V846M280 652V846M318 652V846M343 652V846M380 652V846" stroke-width="2.200"/>
<path d="M399.500 652V846" stroke-width="3.500"/>
</g>
<g fill="none" stroke="#580f3e" stroke-width="2">
<rect x="27" y="193" width="60" height="311"/><path d="M46 650H87V847H46Z"/><path d="M987 652L1178 641V847"/>
</g>

<!-- gray tree circles -->
<circle class="c" cx="646" cy="424" r="78"/>
<circle cx="595" cy="445" r="27" fill="#999" opacity=".35"/>
<circle cx="469" cy="218" r="26" fill="#b8b096" opacity=".7"/>
<circle class="c" cx="1302" cy="345" r="77"/>
<circle class="c" cx="1302" cy="481" r="75"/>
<circle class="c" cx="1243" cy="736" r="70"/>

<!-- dashed (behind plants) -->
<g><path class="d" d="M33 200V490"/><path class="d" d="M72 200V265M72 300V490"/><path class="d" d="M135 195V490"/><path class="d" d="M153 195V490"/><path class="d" d="M172 195V490"/><path class="d" d="M191 195V490"/><path class="d" d="M257 195V490"/><path class="d" d="M284 195V490"/><path class="d" d="M310 195V490"/>
<path class="d" d="M376 195V385"/><path class="d" d="M380 420V622"/><path class="d" d="M432 405V490M436 490V620"/><path class="d" d="M503 190V435"/><path class="d" d="M530 190V430"/><path class="d" d="M554 190V435"/><path class="d" d="M502 468V620M531 468V620M550 468V620"/><path class="d" d="M571 200V475"/><path class="d" d="M578 278V318"/><path class="d" d="M650 217H1217L1235 235L1221 256H650"/>
<path class="d" d="M1003 650V843"/><path class="d" d="M1044 650V843"/><path class="d" d="M1081 650V843"/><path class="d" d="M1121 650V843"/><path class="d" d="M1159 650V843"/>
<path class="d" d="M176 652V846M192 652V846M230 652V831M250 652V831"/>
<path class="d" d="M1226 360L1215 445M1221 356L1213 445"/></g>

<!-- LEFT BEDS plants -->
<rect transform="translate(25,198)" width="16" height="300" fill="url(#psun)"/>
<path d="M50 208V490" stroke="#a8641c" stroke-width="2.600" stroke-dasharray="4 1.500"/>
<path d="M50 208V490" stroke="#fff" stroke-width=".7" stroke-dasharray="2 8"/>
<rect transform="translate(52,197)" width="18" height="62" fill="url(#prad)"/><path d="M56 258L61 265L66 258Z" fill="#c88070"/>
<rect transform="translate(52,297)" width="18" height="132" fill="url(#prad)"/><path d="M56 428L61 435L66 428Z" fill="#c88070"/>
<use href="#na" x="79" y="326"/><use href="#na" x="72" y="494"/>
<rect transform="translate(127,227)" width="8" height="260" fill="url(#pgv)"/>
<rect transform="translate(139,225)" width="12" height="258" fill="url(#pbeet)"/>
<rect transform="translate(157,225)" width="12" height="258" fill="url(#pbeet)"/>
<rect transform="translate(173,224)" width="17" height="260" fill="url(#pbok)"/>
<rect transform="translate(190,228)" width="9" height="256" fill="url(#pyel)"/>
<rect transform="translate(128,197)" width="69" height="15" fill="url(#ppea)"/>
<rect transform="translate(245,197)" width="72" height="15" fill="url(#ppea)"/>
<rect transform="translate(368,197)" width="68" height="15" fill="url(#ppea)"/>
<rect transform="translate(493,201)" width="63" height="15" fill="url(#ppea)"/>
<rect transform="translate(244,232)" width="14" height="254" fill="url(#pdl)"/>
<rect transform="translate(259,236)" width="28" height="248" fill="url(#pspn)"/>
<rect transform="translate(287,232)" width="24" height="252" fill="url(#pcha)"/>
<path d="M268 235H288M263 257H288M268 280H288M268 301H288M268 330H288M265 355H288M264 381H288M266 402H288M263 430H288M265 455H288M263 478H288" stroke="#9a8c70" stroke-width="2.500"/>
<rect transform="translate(311,232)" width="13" height="255" fill="url(#pdl)"/>
<use href="#mg" x="133" y="494"/><use href="#mg" x="148" y="494"/><use href="#mg" x="163" y="494"/><use href="#mg" x="179" y="494"/><use href="#mg" x="194" y="494"/>
<use href="#mg" x="252" y="497"/><use href="#mg" x="267" y="497"/><use href="#mg" x="282" y="497"/><use href="#mg" x="298" y="497"/><use href="#mg" x="313" y="497"/>
<use href="#cuc" x="107" y="213"/><use href="#cuc" x="224" y="213"/><use href="#cuc" x="341" y="212"/>

<!-- centre beds -->
<rect transform="translate(362,222)" width="8" height="378" fill="url(#pgv)"/>
<path d="M373 222V590" stroke="#7a4a16" stroke-width="3" stroke-dasharray="3 1"/>
<path d="M401 195V600" stroke="#8a8a10" stroke-width="2"/>
<use href="#trel" x="401" y="250"/><use href="#trel" x="401" y="307"/><use href="#trel" x="401" y="365"/>
<use href="#trt" x="401" y="413"/><use href="#trt" x="401" y="452"/><use href="#trt" x="400" y="486"/><use href="#trt" x="399" y="519"/><use href="#trt" x="399" y="553"/><use href="#trt" x="398" y="584"/>
<rect transform="translate(425,215)" width="18" height="170" fill="url(#pbas)"/><rect transform="translate(425,420)" width="18" height="68" fill="url(#pbas)"/><rect transform="translate(425,525)" width="18" height="32" fill="url(#pbas)"/>
<use href="#bor" x="432" y="397"/><use href="#bor" x="432" y="500"/><use href="#bor" x="432" y="570"/><use href="#bor" x="432" y="592"/>
<use href="#mg" x="373" y="610"/><use href="#mg" x="389" y="610"/><use href="#mg" x="405" y="610"/><use href="#mg" x="420" y="610"/><use href="#mg" x="436" y="610"/>
<use href="#rhu" x="469" y="218"/><use href="#rhu" x="594" y="444"/>
<rect transform="translate(489,226)" width="26" height="208" fill="url(#pkale)"/>
<rect transform="translate(542,226)" width="26" height="208" fill="url(#pkale)"/>
<rect transform="translate(516,226)" width="12" height="196" fill="url(#pleek)"/>
<rect transform="translate(531,228)" width="12" height="195" fill="url(#pdil)"/>
<rect transform="translate(487,475)" width="10" height="130" fill="url(#paru)"/><rect transform="translate(505,475)" width="10" height="130" fill="url(#paru)"/><rect transform="translate(535,475)" width="10" height="130" fill="url(#paru)"/><rect transform="translate(552,475)" width="10" height="130" fill="url(#paru)"/>
<rect transform="translate(519,476)" width="12" height="130" fill="url(#poni)"/>
<use href="#mg" x="496" y="612"/><use href="#mg" x="512" y="612"/><use href="#mg" x="527" y="612"/><use href="#mg" x="542" y="612"/><use href="#mg" x="557" y="612"/>

<!-- Brussels area -->
<g><use href="#spr" x="583" y="214"/><use href="#spr" x="595" y="213"/><use href="#spr" x="628" y="214"/><use href="#spr" x="641" y="214"/><use href="#spr" x="583" y="261"/><use href="#spr" x="595" y="260"/><use href="#spr" x="628" y="261"/><use href="#spr" x="641" y="261"/></g>
<rect x="605" y="204" width="16" height="66" fill="#9a9a9a" opacity=".35" class="w"/>
<g fill="#fff" stroke="#889a66" stroke-width="1.200"><circle cx="608" cy="204" r="2.500"/><circle cx="618" cy="208" r="2.500"/><circle cx="608" cy="224" r="2.500"/><circle cx="618" cy="226" r="2.500"/><circle cx="608" cy="240" r="2.500"/><circle cx="608" cy="257" r="2.500"/><circle cx="618" cy="259" r="2.500"/></g>
<use href="#na" x="570" y="215"/><use href="#na" x="573" y="268"/><use href="#na" x="580" y="327"/><use href="#na" x="602" y="327"/>
<use href="#sf2" x="657" y="203"/><use href="#sf2" x="670" y="203"/><use href="#sf2" x="683" y="203"/>
<use href="#yf" x="659" y="224"/><use href="#yf" x="670" y="224"/><use href="#yf" x="683" y="224"/>
<use href="#pf" x="657" y="241"/><use href="#pf" x="670" y="241"/><use href="#pf" x="682" y="241"/><use href="#pf" x="691" y="265"/>
<use href="#yf" x="660" y="263"/><use href="#yf" x="671" y="263"/><use href="#yf" x="682" y="263"/>
<use href="#sage" x="618" y="322"/><use href="#sage" x="647" y="322"/><use href="#sage" x="675" y="322"/>
<rect transform="translate(618,336)" width="74" height="14" fill="url(#pbr)"/><rect transform="translate(618,360)" width="74" height="14" fill="url(#pbr)"/>
<use href="#leek" x="578" y="352"/><use href="#leek" x="594" y="352"/><use href="#leek" x="611" y="352"/><use href="#leek" x="578" y="369"/><use href="#leek" x="594" y="369"/><use href="#leek" x="611" y="369"/><use href="#leek" x="578" y="386"/><use href="#leek" x="594" y="386"/><use href="#leek" x="611" y="386"/>

<!-- flower square -->
<g><use href="#yf" x="597" y="495"/><use href="#yf" x="607" y="495"/><use href="#yf" x="620" y="495"/><use href="#yf" x="633" y="495"/><use href="#yf" x="646" y="495"/><use href="#yf" x="660" y="495"/><use href="#yf" x="674" y="495"/><use href="#yf" x="688" y="495"/>
<use href="#yf" x="597" y="512"/><use href="#yf" x="607" y="522"/><use href="#yf" x="597" y="530"/><use href="#yf" x="607" y="542"/><use href="#yf" x="597" y="552"/><use href="#yf" x="607" y="562"/><use href="#yf" x="597" y="572"/><use href="#yf" x="607" y="584"/>
<use href="#yf" x="688" y="510"/><use href="#yf" x="677" y="520"/><use href="#yf" x="688" y="530"/><use href="#yf" x="677" y="542"/><use href="#yf" x="688" y="552"/><use href="#yf" x="677" y="562"/><use href="#yf" x="688" y="572"/><use href="#yf" x="677" y="584"/>
<use href="#yf" x="597" y="602"/><use href="#yf" x="607" y="602"/><use href="#yf" x="620" y="602"/><use href="#yf" x="633" y="602"/><use href="#yf" x="646" y="602"/><use href="#yf" x="660" y="602"/><use href="#yf" x="674" y="602"/><use href="#yf" x="688" y="602"/></g>

<!-- top strip -->
<rect transform="translate(719,197)" width="62" height="14" fill="url(#ppea)"/><rect transform="translate(892,197)" width="38" height="14" fill="url(#ppea)"/><rect transform="translate(1008,197)" width="68" height="14" fill="url(#ppea)"/>
<use href="#cuc" x="795" y="205"/><use href="#cuc" x="836" y="205"/><use href="#cuc" x="876" y="205"/>
<rect transform="translate(696,212)" width="244" height="30" fill="url(#pbro)"/>
<rect transform="translate(703,242)" width="232" height="12" fill="url(#phsp)"/>
<rect transform="translate(699,260)" width="457" height="18" fill="url(#ppur)"/>
<g fill="#54802e" stroke="#2a4a16" stroke-width=".5"><path d="M948 198L953 215L948 222L943 215ZM940 205L948 222L955 205L950 216H946Z"/><path d="M981 198L986 215L981 222L976 215Z"/><path d="M948 236L953 252L948 258L943 252ZM940 240L948 258L956 240L950 250H946Z"/><path d="M981 236L986 252L981 258L976 252Z"/></g>
<rect x="994" y="204" width="6" height="58" fill="#4a5a3c" opacity=".8"/>
<g fill="#26401a" stroke="#050a05" stroke-width=".6"><path d="M1014 213L1030 218L1026 228L1018 226Z"/><path d="M1030 214L1048 220L1038 228Z"/><path d="M1048 214L1068 218L1062 230L1050 226Z"/><path d="M1014 230L1024 228L1026 244L1018 246Z"/><path d="M1062 230L1072 232L1068 246L1058 242Z"/><path d="M1014 248L1032 246L1036 260L1022 260Z"/><path d="M1036 246L1050 248L1054 260L1040 260Z"/><path d="M1052 246L1070 246L1072 260L1058 260Z"/></g>
<rect transform="translate(1082,202)" width="10" height="50" fill="url(#pora)"/><rect transform="translate(1092,202)" width="10" height="10" fill="url(#pora)"/><rect transform="translate(1106,202)" width="10" height="50" fill="url(#pora)"/>
<use href="#sage" x="1131" y="240"/>
<use href="#sf2" x="1164" y="268"/><use href="#sf2" x="1175" y="268"/><use href="#sf2" x="1186" y="268"/><use href="#sf2" x="1197" y="268"/>

<!-- bottom-left -->
<rect transform="translate(70,657)" width="14" height="186" fill="url(#pmst)"/>
<rect transform="translate(107,655)" width="26" height="182" fill="url(#pkale)"/>
<rect transform="translate(132,654)" width="12" height="180" fill="url(#pleek)"/>
<rect transform="translate(169,658)" width="16" height="172" fill="url(#pkoh)"/>
<rect transform="translate(186,658)" width="12" height="168" fill="url(#pbeet)"/>
<rect transform="translate(224,655)" width="20" height="176" fill="url(#pbb)"/><rect transform="translate(243,655)" width="20" height="176" fill="url(#pbb)"/>
<use href="#egg" x="298" y="683"/><use href="#egg" x="298" y="705"/><use href="#egg" x="298" y="728"/><use href="#egg" x="298" y="751"/><use href="#egg" x="298" y="774"/><use href="#egg" x="298" y="797"/><use href="#egg" x="298" y="820"/>
<path d="M298 645V665M288 652L308 662M288 662L308 652M292 648L304 666" stroke="#a0a880" stroke-width="1.500"/>
<use href="#pep" x="359" y="678"/><use href="#pep" x="359" y="699"/><use href="#pep" x="359" y="721"/><use href="#pep" x="359" y="742"/><use href="#pep" x="359" y="764"/><use href="#pep" x="359" y="785"/><use href="#pep" x="359" y="807"/><use href="#pep" x="359" y="828"/>
<use href="#mg" x="347" y="662"/><use href="#mg" x="361" y="662"/><use href="#mg" x="375" y="662"/>
<rect transform="translate(167,831)" width="34" height="15" fill="url(#ppea)"/><rect transform="translate(225,831)" width="35" height="15" fill="url(#ppea)"/><rect transform="translate(283,831)" width="32" height="15" fill="url(#ppea)"/><rect transform="translate(345,831)" width="32" height="15" fill="url(#ppea)"/>
<path d="M51 836H58V846L54.500 850L51 846Z" fill="#d8202c"/>

<!-- barrels -->
<use href="#bar" x="851" y="827"/><use href="#bar" x="886" y="827"/><circle cx="919" cy="829" r="14" fill="#0b6a30" stroke="#000"/><path d="M912 836L926 822M915 838L928 826" stroke="#083a1c" stroke-width="1.400"/>

<!-- bottom-right -->
<g><use href="#thy" x="1044" y="652"/><use href="#thy" x="1050" y="663"/><use href="#thy" x="1068" y="652"/><use href="#thy" x="1075" y="665"/><use href="#thy" x="1090" y="652"/><use href="#thy" x="1095" y="665"/><use href="#thy" x="1110" y="652"/><use href="#thy" x="1117" y="665"/><use href="#thy" x="1133" y="652"/><use href="#thy" x="1140" y="664"/><use href="#thy" x="1157" y="652"/><use href="#thy" x="1163" y="664"/><use href="#thy" x="1008" y="668"/><use href="#thy" x="1014" y="678"/><use href="#thy" x="1006" y="692"/><use href="#thy" x="1014" y="705"/><use href="#thy" x="1007" y="716"/><use href="#thy" x="1014" y="727"/></g>
<rect transform="translate(1022,676)" width="153" height="15" fill="url(#pmin)"/>
<rect transform="translate(1022,691)" width="15" height="75" fill="url(#pmin)"/>
<rect transform="translate(1160,691)" width="15" height="75" fill="url(#pmin)" opacity=".65"/>
<rect transform="translate(1022,763)" width="153" height="15" fill="url(#pmin)"/>
<use href="#ros" x="1013" y="746"/><use href="#ros" x="1013" y="761"/><use href="#ros" x="1013" y="775"/><use href="#ros" x="1013" y="790"/><use href="#ros" x="1013" y="804"/><use href="#ros" x="1013" y="820"/>
<use href="#lem" x="1040" y="803"/><use href="#lem" x="1096" y="803"/><use href="#lem" x="1150" y="803"/>
<path d="M1054 828C1050 820 1053 818 1058 824ZM1066 826C1066 820 1072 818 1072 826Z" fill="#5a9a3a"/><circle cx="1056" cy="835" r="5.500" fill="#c8283c"/><circle cx="1068" cy="835" r="5.500" fill="#c8283c"/><circle cx="1062" cy="838" r="5" fill="#e0405a"/>

<!-- right bed -->
<path d="M1221 345L1232 333L1267 333" stroke="#2e7a30" stroke-width="8" stroke-dasharray="4 1" fill="none"/><path d="M1235 335H1266" stroke="#1a5a20" stroke-width="4"/><path d="M1213 361L1232 342" stroke="#1e6a28" stroke-width="8"/>
<use href="#cab" x="1245" y="357"/><use href="#cab" x="1259" y="357"/><use href="#cab" x="1273" y="357"/>
<use href="#yf" x="1212" y="372"/><use href="#yf" x="1213" y="394"/><use href="#yf" x="1218" y="424"/>
<path d="M1240 383V372M1240 383L1234 372M1240 383L1247 373" stroke="#4a5a3a" stroke-width="1.500"/><path d="M1243 414V402M1243 414L1237 402M1243 414L1250 404" stroke="#4a5a3a" stroke-width="1.500"/>
<rect transform="translate(1211,447) rotate(-4)" width="16" height="110" fill="url(#plet)"/>
<rect transform="translate(1257,371) rotate(-2)" width="16" height="187" fill="url(#plet)"/>
<rect transform="translate(1238,431)" width="16" height="117" fill="url(#pcab)"/>
<use href="#cab" x="1295" y="543"/>

<!-- gray paths on top -->
<g><path class="g" d="M600 329H682L672 447"/><path class="g" d="M628 510V610M648 510V610M672 510V610"/><path class="g" d="M1250 345L1255 430H1285L1280 383"/><path class="g" d="M1267 335L1323 355"/><path class="g" d="M1278 365L1325 400"/><path class="g" d="M1256 458L1327 455"/><path class="g" d="M1256 460V550"/><path class="g" d="M1237 546L1323 557"/><path class="g" d="M1240 752L1259 756"/></g>
<g><path d="M1235 227L1237 233L1241 235L1237 237L1235 243L1233 237L1229 235L1233 233Z" fill="#3a4ab0"/>
<use href="#noz" x="1324" y="360"/><use href="#noz" x="1325" y="400"/><use href="#noz" x="1327" y="456"/><use href="#noz" x="1328" y="555"/><use href="#noz" x="1260" y="756"/>
<use href="#noz" x="1003" y="843"/><use href="#noz" x="1044" y="843"/><use href="#noz" x="1081" y="843"/><use href="#noz" x="1121" y="843"/><use href="#noz" x="1159" y="843"/>
<use href="#noz" x="34" y="498"/></g>

<!-- trees -->
<use href="#tree" x="646" y="430"/>
<use href="#tree" x="1298" y="344"/>
<use href="#tree" x="1301" y="477"/>
<use href="#tree" x="1233" y="735"/>

<!-- labels -->
<g style="font:6.7px 'DejaVu Sans',sans-serif;text-anchor:middle;fill:#222">
<text x="107" y="235">Cucumber</text><text x="224" y="233">Cucumber</text><text x="342" y="231">Cucumber</text>
<text x="161" y="219">Peas</text><text x="273" y="220">Peas</text><text x="412" y="219">Peas</text><text x="523" y="219">Peas</text>
<text x="106" y="324">Nasturtium</text><text x="29" y="515">Sunflower</text><text x="42" y="525">Parsnip</text><text x="56" y="538">Turnip</text><text x="56" y="547">Turnip</text><text x="89" y="514">Nasturtium</text>
<text x="142" y="515">Beet</text><text x="131" y="525">Radish</text><text x="163" y="515">Beet</text><text x="164" y="528">Marigold</text><text x="188" y="516">Bok Choy</text><text x="197" y="525">Radish</text><text x="194" y="534">Dill</text>
<text x="249" y="516">Spinach (New Zealand)</text><text x="239" y="528">Beans (Pole)</text><text x="285" y="522">Marigold</text><text x="289" y="532">Swiss Chard</text><text x="333" y="491">Beans (Pole)</text>
<text x="469" y="246">Rhubarb</text><text x="402" y="344">Tomatillo</text><text x="453" y="414">Borage</text><text x="455" y="459">Basil</text><text x="453" y="514">Borage</text><text x="454" y="549">Basil</text><text x="349" y="597">Radish</text><text x="357" y="606">Carrot</text>
<text x="404" y="631">Marigold</text><text x="434" y="630">Basil</text><text x="435" y="639">Borage</text><text x="493" y="633">Arugula</text><text x="524" y="633">Marigold</text><text x="525" y="641">Onion</text><text x="557" y="632">Arugula</text>
<text x="501" y="441">Kale</text><text x="522" y="440">Leek</text><text x="539" y="440">Dill</text><text x="555" y="440">Kale</text>
<text x="583" y="203">Nasturtium</text><text x="614" y="284">Brussels Sprouts</text><text x="613" y="292">Chamomile</text><text x="671" y="281">Flower</text><text x="671" y="287">Flower</text><text x="671" y="293">Flower</text><text x="670" y="301">Flower</text><text x="591" y="299">Nasturtium</text><text x="592" y="341">Nasturtium</text>
<text x="596" y="408">Leek</text><text x="593" y="471">Rhubarb</text><text x="637" y="471">Tree (Sm</text><text x="642" y="565">Flower</text><text x="707" y="330">Sage</text><text x="704" y="372">Basil</text>
<text x="749" y="289">Peas</text><text x="782" y="304">Broccoli</text><text x="827" y="292">Tarragon</text><text x="820" y="302">Spinach</text><text x="830" y="316">Cucumber</text><text x="901" y="289">Peas</text><text x="926" y="283">Flower</text><text x="997" y="292">Chives (Garlic)</text><text x="1040" y="290">Peas</text><text x="1040" y="301">Mizuna</text><text x="1097" y="294">Cilantro</text><text x="1137" y="293">Sage</text><text x="1178" y="281">Flower</text><text x="965" y="243">Sorrel</text>
<text x="1233" y="314">Lettuce (Crisphead)</text><text x="1244" y="324">Lettuce (Miners)</text><text x="1185" y="345">Lettuce (Miners)</text><text x="1167" y="373">Chives (Garlic)</text><text x="1175" y="388">Flower</text><text x="1172" y="404">Flower</text><text x="1167" y="424">Chives (Garlic)</text><text x="1172" y="442">Flower</text><text x="1181" y="507">Lettuce (Leaf)</text><text x="1184" y="514">Lettuce (Crisphead)</text><text x="1300" y="406" style="fill:#666">Tree (Small)</text><text x="1304" y="525">Tree (Small)</text><text x="1262" y="574">Lettuce (Leaf)</text><text x="1296" y="586">Lettuce (Crisphead)</text>
<text x="78" y="645">Mustard</text><text x="120" y="645">Kale</text><text x="135" y="648">Leek</text><text x="171" y="645">Kohlrabi</text><text x="192" y="645">Beet</text><text x="243" y="649">Beans (Bush Snap)</text><text x="296" y="633">Tarragon</text><text x="298" y="640">Eggplant</text><text x="361" y="647">Marigold</text><text x="383" y="734">Pepper</text>
<text x="184" y="857">Peas</text><text x="242" y="855">Peas</text><text x="298" y="858">Peas</text><text x="361" y="857">Peas</text>
<text x="1005" y="629">Thyme</text><text x="1097" y="629">Thyme</text><text x="1099" y="739">Mint</text><text x="1096" y="827">Lemon Balm</text><text x="1011" y="860">Rosemary</text><text x="1062" y="860">Raspberry Bush</text><text x="1233" y="798">Tree (Small)</text>
</g>

<!-- tooltip -->
<rect x="652.500" y="462.500" width="66" height="20" rx="3" fill="#ffffd2" stroke="#d8d8a8"/>
<text x="685" y="475" style="font:9.500px 'DejaVu Sans',sans-serif;text-anchor:middle;fill:#222">Tree (Small)</text>

<!-- rulers -->
<rect x="0" y="178" width="1391" height="14" fill="#dcdcdc"/><rect x="0" y="178" width="1391" height="1.500" fill="#aaa"/>
<rect x="0" y="972.500" width="1391" height="12" fill="#dcdcdc"/><path d="M0 985H1391" stroke="#aaa"/>
<rect x="0" y="178" width="8" height="807" fill="#dcdcdc"/><rect x="1378" y="178" width="13" height="807" fill="#dcdcdc"/>
<path d="M0 984.500H1391" stroke="#bbb"/>
<rect x="8" y="179" width="1370" height="13" fill="url(#tick)"/>
<rect x="8" y="960" width="1370" height="13" fill="url(#tick)"/>
<g id="hr"><text class="r" y="188"><tspan x="9">0'</tspan><tspan x="28">1'</tspan><tspan x="48">2'</tspan><tspan x="67">3'</tspan><tspan x="87">4'</tspan><tspan x="106">5'</tspan><tspan x="126">6'</tspan><tspan x="145">7'</tspan><tspan x="165">8'</tspan><tspan x="184">9'</tspan><tspan x="204">10'</tspan><tspan x="223">11'</tspan><tspan x="243">12'</tspan><tspan x="262">13'</tspan><tspan x="282">14'</tspan><tspan x="301">15'</tspan><tspan x="321">16'</tspan><tspan x="340">17'</tspan><tspan x="360">18'</tspan><tspan x="379">19'</tspan><tspan x="399">20'</tspan><tspan x="418">21'</tspan><tspan x="438">22'</tspan><tspan x="457">23'</tspan><tspan x="477">24'</tspan><tspan x="496">25'</tspan><tspan x="516">26'</tspan><tspan x="535">27'</tspan><tspan x="555">28'</tspan><tspan x="574">29'</tspan><tspan x="594">30'</tspan><tspan x="613">31'</tspan><tspan x="633">32'</tspan><tspan x="652">33'</tspan><tspan x="672">34'</tspan><tspan x="691">35'</tspan><tspan x="711">36'</tspan><tspan x="730">37'</tspan><tspan x="750">38'</tspan><tspan x="769">39'</tspan><tspan x="789">40'</tspan><tspan x="808">41'</tspan><tspan x="828">42'</tspan><tspan x="847">43'</tspan><tspan x="867">44'</tspan><tspan x="886">45'</tspan><tspan x="906">46'</tspan><tspan x="925">47'</tspan><tspan x="945">48'</tspan><tspan x="964">49'</tspan><tspan x="984">50'</tspan><tspan x="1003">51'</tspan><tspan x="1023">52'</tspan><tspan x="1042">53'</tspan><tspan x="1062">54'</tspan><tspan x="1081">55'</tspan><tspan x="1101">56'</tspan><tspan x="1120">57'</tspan><tspan x="1140">58'</tspan><tspan x="1159">59'</tspan><tspan x="1179">60'</tspan><tspan x="1198">61'</tspan><tspan x="1218">62'</tspan><tspan x="1237">63'</tspan><tspan x="1257">64'</tspan><tspan x="1276">65'</tspan><tspan x="1296">66'</tspan><tspan x="1315">67'</tspan><tspan x="1335">68'</tspan><tspan x="1354">69'</tspan></text></g>
<use href="#hr" y="793"/>
<g id="vr"><g transform="rotate(-90)"><text class="r" y="6"><tspan x="-192">0'</tspan><tspan x="-212">1'</tspan><tspan x="-231">2'</tspan><tspan x="-251">3'</tspan><tspan x="-270">4'</tspan><tspan x="-290">5'</tspan><tspan x="-309">6'</tspan><tspan x="-329">7'</tspan><tspan x="-348">8'</tspan><tspan x="-368">9'</tspan><tspan x="-387">10'</tspan><tspan x="-407">11'</tspan><tspan x="-426">12'</tspan><tspan x="-446">13'</tspan><tspan x="-465">14'</tspan><tspan x="-485">15'</tspan><tspan x="-504">16'</tspan><tspan x="-524">17'</tspan><tspan x="-543">18'</tspan><tspan x="-563">19'</tspan><tspan x="-582">20'</tspan><tspan x="-602">21'</tspan><tspan x="-621">22'</tspan><tspan x="-641">23'</tspan><tspan x="-660">24'</tspan><tspan x="-680">25'</tspan><tspan x="-699">26'</tspan><tspan x="-719">27'</tspan><tspan x="-738">28'</tspan><tspan x="-758">29'</tspan><tspan x="-777">30'</tspan><tspan x="-797">31'</tspan><tspan x="-816">32'</tspan><tspan x="-836">33'</tspan><tspan x="-855">34'</tspan><tspan x="-875">35'</tspan><tspan x="-894">36'</tspan><tspan x="-914">37'</tspan><tspan x="-933">38'</tspan><tspan x="-953">39'</tspan></text></g></g>
<use href="#vr" x="1381"/>
</svg>
</body></html>
